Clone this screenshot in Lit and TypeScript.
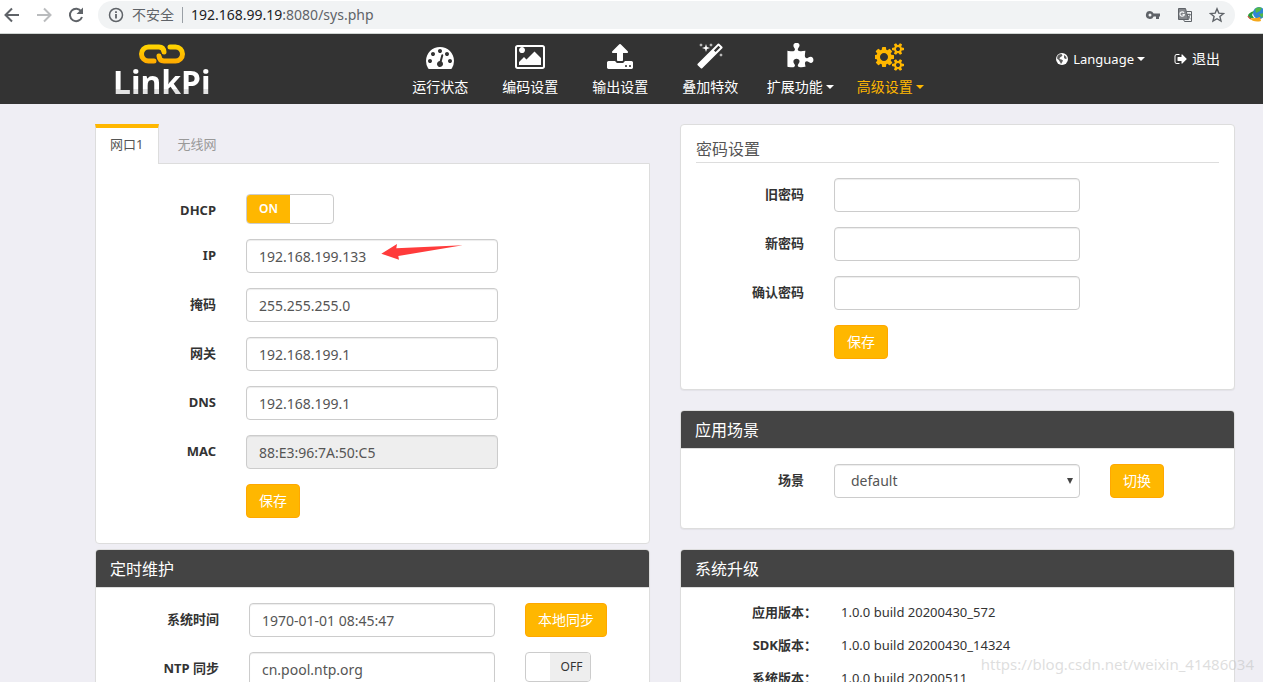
import { LitElement, html, css, svg, nothing } from "lit";
import { customElement, property, state } from "lit/decorators.js";

const ICONS: Record<string, { w: number; d: string }> = {
  gauge: {
    w: 1792,
    d: "M384 1152q0-53-37.5-90.5t-90.5-37.5-90.5 37.5-37.5 90.5 37.5 90.5 90.5 37.5 90.5-37.5 37.5-90.5zm192-448q0-53-37.5-90.5t-90.5-37.5-90.5 37.5-37.5 90.5 37.5 90.5 90.5 37.5 90.5-37.5 37.5-90.5zm428 481l101-382q6-26-7.5-48.5t-38.5-29.5-48 6.5-30 39.5l-101 382q-60 5-107 43.5t-63 98.5q-20 77 20 146t117 89 146-20 89-117q16-60-6-117t-72-91zm660-33q0-53-37.5-90.5t-90.5-37.5-90.5 37.5-37.5 90.5 37.5 90.5 90.5 37.5 90.5-37.5 37.5-90.5zm-640-640q0-53-37.5-90.5t-90.5-37.5-90.5 37.5-37.5 90.5 37.5 90.5 90.5 37.5 90.5-37.5 37.5-90.5zm448 192q0-53-37.5-90.5t-90.5-37.5-90.5 37.5-37.5 90.5 37.5 90.5 90.5 37.5 90.5-37.5 37.5-90.5zm320 448q0 261-141 483-19 29-54 29h-1402q-35 0-54-29-141-221-141-483 0-182 71-348t191-286 286-191 348-71 348 71 286 191 191 286 71 348z",
  },
  picture: {
    w: 2048,
    d: "M704 448q0 80-56 136t-136 56-136-56-56-136 56-136 136-56 136 56 56 136zm1024 512v448h-1408v-192l320-320 160 160 512-512zm96-704h-1600q-13 0-22.5 9.5t-9.5 22.5v1216q0 13 9.5 22.5t22.5 9.5h1600q13 0 22.5-9.5t9.5-22.5v-1216q0-13-9.5-22.5t-22.5-9.5zm160 32v1216q0 66-47 113t-113 47h-1600q-66 0-113-47t-47-113v-1216q0-66 47-113t113-47h1600q66 0 113 47t47 113z",
  },
  upload: {
    w: 1792,
    d: "M1344 1472q0-26-19-45t-45-19-45 19-19 45 19 45 45 19 45-19 19-45zm256 0q0-26-19-45t-45-19-45 19-19 45 19 45 45 19 45-19 19-45zm128-224v320q0 40-28 68t-68 28h-1472q-40 0-68-28t-28-68v-320q0-40 28-68t68-28h427q21 56 70.5 92t110.5 36h256q61 0 110.5-36t70.5-92h427q40 0 68 28t28 68zm-325-648q-17 40-59 40h-256v448q0 26-19 45t-45 19h-256q-26 0-45-19t-19-45v-448h-256q-42 0-59-40-17-39 14-69l448-448q18-19 45-19t45 19l448 448q31 30 14 69z",
  },
  magic: {
    w: 1792,
    d: "M1254 581l293-293-107-107-293 293zm447-293q0 27-18 45l-1286 1286q-18 18-45 18t-45-18l-198-198q-18-18-18-45t18-45l1286-1286q18-18 45-18t45 18l198 198q18 18 18 45zm-1351-190l98 30-98 30-30 98-30-98-98-30 98-30 30-98zm350 162l196 60-196 60-60 196-60-196-196-60 196-60 60-196zm930 478l98 30-98 30-30 98-30-98-98-30 98-30 30-98zm-640-640l98 30-98 30-30 98-30-98-98-30 98-30 30-98z",
  },
  puzzle: {
    w: 1792,
    d: "M1755 1083q0 81-44.5 135t-123.5 54q-41 0-77.5-17.5t-59-38-56.5-38-71-17.5q-110 0-110 124 0 39 16 115t15 115v5q-22 0-33 1-34 3-97.5 11.5t-115.5 13.5-98 5q-61 0-103-26.5t-42-83.5q0-37 17.5-71t38-56.5 38-59 17.5-77.5q0-79-54-123.5t-135-44.5q-84 0-143 45.5t-59 127.5q0 43 15 83t33.5 64.5 33.5 53 15 50.5q0 45-46 89-37 35-117 35-95 0-245-24-9-2-27.5-4t-27.5-4l-13-2q-1 0-3-1-2 0-2-1v-1024q2 1 17.5 3.5t34 5 21.5 3.5q150 24 245 24 80 0 117-35 46-44 46-89 0-22-15-50.5t-33.5-53-33.5-64.5-15-83q0-82 59-127.5t144-45.5q80 0 134 44.5t54 123.5q0 41-17.5 77.5t-38 59-38 56.5-17.5 71q0 57 42 83.5t103 26.5q64 0 180-15t163-17v2q-1 2-3.5 17.5t-5 34-3.5 21.5q-24 150-24 245 0 80 35 117 44 46 89 46 22 0 50.5-15t53-33.5 64.5-33.5 83-15q82 0 127.5 59t45.5 143z",
  },
  cogs: {
    w: 1920,
    d: "M832 896q0-106-75-181t-181-75-181 75-75 181 75 181 181 75 181-75 75-181zm768 512q0-52-38-90t-90-38-90 38-38 90q0 53 37.5 90.5t90.5 37.5 90.5-37.5 37.5-90.5zm0-1024q0-52-38-90t-90-38-90 38-38 90q0 53 37.5 90.5t90.5 37.5 90.5-37.5 37.5-90.5zm-384 421v185q0 10-7 19.5t-16 10.5l-155 24q-11 35-32 76 34 48 90 115 7 11 7 20 0 12-7 19-23 30-82.5 89.5t-78.5 59.5q-11 0-21-7l-115-90q-37 19-77 31-11 108-23 155-7 24-30 24h-186q-11 0-20-7.5t-10-17.5l-23-153q-34-10-75-31l-118 89q-7 7-20 7-11 0-21-8-144-133-144-160 0-9 7-19 10-14 41-53t47-61q-23-44-35-82l-152-24q-10-1-17-9.5t-7-19.5v-185q0-10 7-19.5t16-10.5l155-24q11-35 32-76-34-48-90-115-7-11-7-20 0-12 7-20 22-30 82-89t79-59q11 0 21 7l115 90q34-18 77-32 11-108 23-154 7-24 30-24h186q11 0 20 7.5t10 17.5l23 153q34 10 75 31l118-89q8-7 20-7 11 0 21 8 144 133 144 160 0 8-7 19-12 16-42 54t-45 60q23 48 34 82l152 23q10 2 17 10.5t7 19.5zm640 533v140q0 16-149 31-12 27-30 52 51 113 51 138 0 4-4 7-122 71-124 71-8 0-46-47t-52-68q-20 2-30 2t-30-2q-14 21-52 68t-46 47q-2 0-124-71-4-3-4-7 0-25 51-138-18-25-30-52-149-15-149-31v-140q0-16 149-31 13-29 30-52-51-113-51-138 0-4 4-7 4-2 35-20t59-34 30-16q8 0 46 46.5t52 67.5q20-2 30-2t30 2q51-71 92-112l6-2q4 0 124 70 4 3 4 7 0 25-51 138 17 23 30 52 149 15 149 31zm0-1024v140q0 16-149 31-12 27-30 52 51 113 51 138 0 4-4 7-122 71-124 71-8 0-46-47t-52-68q-20 2-30 2t-30-2q-14 21-52 68t-46 47q-2 0-124-71-4-3-4-7 0-25 51-138-18-25-30-52-149-15-149-31v-140q0-16 149-31 13-29 30-52-51-113-51-138 0-4 4-7 4-2 35-20t59-34 30-16q8 0 46 46.5t52 67.5q20-2 30-2t30 2q51-71 92-112l6-2q4 0 124 70 4 3 4 7 0 25-51 138 17 23 30 52 149 15 149 31z",
  },
  signout: {
    w: 1664,
    d: "M704 1440q0 4 1 20t.5 26.5-3 23.5-10 19.5-20.5 6.5h-320q-119 0-203.5-84.5t-84.5-203.5v-704q0-119 84.5-203.5t203.5-84.5h320q13 0 22.5 9.5t9.5 22.5q0 4 1 20t.5 26.5-3 23.5-10 19.5-20.5 6.5h-320q-66 0-113 47t-47 113v704q0 66 47 113t113 47h312l11.5 1 11.5 3 8 5.5 7 9 2 13.5zm928-544q0 26-19 45l-544 544q-19 19-45 19t-45-19-19-45v-288h-448q-26 0-45-19t-19-45v-384q0-26 19-45t45-19h448v-288q0-26 19-45t45-19 45 19l544 544q19 19 19 45z",
  },
};

const icon = (name: string, cls: string) => {
  const i = ICONS[name];
  return html`<svg class=${cls} viewBox="0 0 ${i.w} 1792" aria-hidden="true">
    ${svg`<path d=${i.d} fill="currentColor"/>`}
  </svg>`;
};

const reset = css`
  *,
  *::before,
  *::after {
    box-sizing: border-box;
  }
  svg {
    display: block;
    flex: none;
  }
  a {
    color: inherit;
    text-decoration: none;
  }
  button,
  input,
  select {
    font: inherit;
    margin: 0;
  }
`;

@customElement("browser-bar")
export class BrowserBar extends LitElement {
  static styles = [
    reset,
    css`
      :host {
        display: flex;
        align-items: flex-start;
        height: 34px;
        padding: 1px 0 0 2px;
        background: #fff;
        border-bottom: 1px solid #d0d5d2;
        overflow: hidden;
        color: #5f6368;
        font-size: 14px;
        line-height: 28px;
      }
      .tool {
        display: grid;
        place-items: center;
        width: 32px;
        height: 28px;
        padding: 0;
        border: 0;
        background: none;
        color: #5f6368;
        flex: none;
      }
      .tool svg {
        margin-right: 12px;
      }
      .tool.off {
        color: #babcbe;
      }
      .pill {
        display: flex;
        flex: 1;
        align-items: center;
        gap: 8px;
        height: 28px;
        padding: 0 10px;
        border-radius: 14px;
        background: #f1f3f4;
      }
      .sep {
        width: 1px;
        height: 16px;
        background: #9aa0a6;
      }
      .url {
        flex: 1;
      }
      .host {
        color: #202124;
      }
      .acts {
        display: flex;
        gap: 16px;
      }
      .act {
        display: block;
        padding: 0;
        border: 0;
        background: none;
        color: #5f6368;
      }
      .ext {
        width: 16px;
        height: 28px;
        margin-left: 12px;
        display: flex;
        align-items: center;
        overflow: hidden;
      }
    `,
  ];
  render() {
    return html`
      <button class="tool" aria-label="back">
        <svg width="18" height="18" viewBox="0 0 18 18" fill="none" stroke="currentColor" stroke-width="2"><path d="M16 9H3M9 2.5 2.5 9 9 15.500" /></svg>
      </button>
      <button class="tool off" aria-label="forward">
        <svg width="18" height="18" viewBox="0 0 18 18" fill="none" stroke="currentColor" stroke-width="2"><path d="M2 9h13M9 2.500 15.500 9 9 15.500" /></svg>
      </button>
      <button class="tool" aria-label="reload">
        <svg width="18" height="18" viewBox="0 0 18 18" fill="none" stroke="currentColor" stroke-width="2"><path d="M14.300 5.500A6.200 6.200 0 1 0 15 11" /><path d="M16 1.500v6.500H9.500z" fill="currentColor" stroke="none" /></svg>
      </button>
      <div class="pill">
        <svg width="16" height="16" viewBox="0 0 16 16" fill="none" stroke="currentColor" stroke-width="1.500"><circle cx="8" cy="8" r="6.500" /><path d="M8 7v4.500M8 4.300v1.700" stroke-width="1.800" /></svg>
        <span>不安全</span>
        <span class="sep"></span>
        <span class="url"><span class="host">192.168.99.19</span>:8080/sys.php</span>
        <div class="acts">
          <button class="act" aria-label="password">
            <svg width="16" height="16" viewBox="0 0 16 16"><path fill="currentColor" fill-rule="evenodd" d="M5 4a4 4 0 1 0 3.600 5.500H11V12h3V9.500h1v-3H8.600A4 4 0 0 0 5 4zm0 2.500a1.500 1.500 0 1 1 0 3 1.500 1.500 0 0 1 0-3z" /></svg>
          </button>
          <button class="act" aria-label="translate">
            <svg width="16" height="16" viewBox="0 0 16 16" fill="none" stroke="currentColor"><path d="M1.500 1.500h7l3 11h-10z" fill="currentColor" fill-opacity=".75" /><path d="M9.500 4.500h5v10h-7l-1-2" /><path d="M7 5.800A2.200 2.200 0 1 0 7.300 7.500H5.500" stroke="#f1f3f4" stroke-width="1.200" /><path d="M9.800 7.500h4M12 6.500v1M13 8c-.5 2-1.500 3-2.500 3.800M10.800 8.500c.5 1.500 1.500 2.500 2.700 3.300" stroke-width=".9" /></svg>
          </button>
          <button class="act" aria-label="bookmark">
            <svg width="16" height="16" viewBox="0 0 16 16" fill="none" stroke="currentColor" stroke-width="1.400"><path d="m8 1.800 1.800 4.300 4.700.4-3.600 3 1.100 4.600L8 11.700l-4 2.400 1.100-4.600-3.600-3 4.700-.4z" /></svg>
          </button>
        </div>
      </div>
      <div class="ext">
        <svg width="20" height="18" viewBox="0 0 20 18"><circle cx="12" cy="7" r="6" fill="#2f86d6" /><path d="M8 3q3-3 7-1l-2 3-4 2zM12 8l5-1-2 5z" fill="#52b947" /><path d="M7 5Q1 7 1 10q1 3 6 2l-2-3z" fill="#2a9c3a" /><path d="M2 12q5 5 12 3l-1-4q-5 2-11 1z" fill="#f5a81c" /><path d="M1 10q0 2 3 3" stroke="#d13a2f" fill="none" /></svg>
      </div>
    `;
  }
}

interface NavItem {
  icon: string;
  text: string;
  menu?: boolean;
  active?: boolean;
}

@customElement("top-nav")
export class TopNav extends LitElement {
  static styles = [
    reset,
    css`
      :host {
        display: flex;
        height: 70px;
        padding: 0 43px 0 113px;
        background: #333;
        color: #fff;
        font-size: 14px;
        line-height: 20px;
      }
      .brand {
        display: flex;
        flex-direction: column;
        align-items: center;
        padding-top: 10px;
      }
      .name {
        font-family: "Noto Sans", sans-serif;
        font-weight: 700;
        font-size: 32px;
        line-height: 42px;
        margin-top: -3px;
        background: linear-gradient(#fff 66%, #e2e2e2 66%);
        background-clip: text;
        -webkit-background-clip: text;
        color: transparent;
      }
      .menu {
        display: flex;
        margin-left: auto;
        padding-top: 9px;
      }
      .item {
        display: flex;
        flex-direction: column;
        align-items: center;
        gap: 6px;
        width: 90px;
        white-space: nowrap;
      }
      .item.active {
        color: #ffb700;
      }
      .glyph {
        height: 28px;
      }
      .caption {
        display: flex;
        align-items: center;
        gap: 3px;
      }
      .caret {
        border: 4px solid transparent;
        border-top-color: currentColor;
        border-bottom: 0;
      }
      .side {
        display: flex;
        gap: 29px;
        margin-left: 121px;
        padding-top: 15px;
        font-size: 13px;
      }
      .side-link {
        display: flex;
        align-items: center;
        gap: 5px;
        height: 20px;
      }
      .logout {
        font-size: 14px;
      }
      .small {
        height: 14px;
      }
    `,
  ];
  private items: NavItem[] = [
    { icon: "gauge", text: "运行状态" },
    { icon: "picture", text: "编码设置" },
    { icon: "upload", text: "输出设置" },
    { icon: "magic", text: "叠加特效" },
    { icon: "puzzle", text: "扩展功能", menu: true },
    { icon: "cogs", text: "高级设置", menu: true, active: true },
  ];
  render() {
    return html`
      <a class="brand" href="#">
        <svg width="46" height="20" viewBox="0 0 46 20" fill="none" stroke-width="5" stroke-linecap="round">
          <defs>
            <linearGradient id="gold" gradientUnits="userSpaceOnUse" x1="0" y1="0" x2="0" y2="20">
              <stop offset="0" stop-color="#ffd800" /><stop offset="1" stop-color="#ffa800" />
            </linearGradient>
          </defs>
          <path stroke="url(#gold)" d="M15 17H9.500a7 7 0 0 1 0-14H20q4.500 0 5 5" />
          <path stroke="url(#gold)" d="M31 3h5.500a7 7 0 0 1 0 14H25q-4.500 0-5-5" />
        </svg>
        <span class="name">LinkPi</span>
      </a>
      <nav class="menu">
        ${this.items.map(
          (i) => html`<a class="item ${i.active ? "active" : ""}" href="#">
            ${icon(i.icon, "glyph")}
            <span class="caption">${i.text}${i.menu ? html`<span class="caret"></span>` : nothing}</span>
          </a>`
        )}
      </nav>
      <div class="side">
        <a class="side-link" href="#">
          <svg width="12" height="12" viewBox="0 0 12 12"><circle cx="6" cy="6" r="6" fill="#fff" /><path d="M3 1.500 5.500 1l1 1.500-1 1L4 4.500 3.500 6l2 .5 1.500 1-1 2-1 1.500L4 9 2.800 7 1 5.500 1.500 3zM8 2l2 1.500.8 2L9.500 6 8 5V3.500z" fill="#333" fill-opacity=".8" /></svg>
          <span class="caption">Language<span class="caret"></span></span>
        </a>
        <a class="side-link logout" href="#">${icon("signout", "small")}<span>退出</span></a>
      </div>
    `;
  }
}

/* Two-state switch: the coloured half slides over a hidden checkbox. */
@customElement("toggle-switch")
export class ToggleSwitch extends LitElement {
  @property({ type: Boolean }) on = false;
  @property() name = "";
  static styles = [
    reset,
    css`
      :host {
        display: block;
      }
      .switch {
        position: relative;
        display: inline-flex;
        height: 30px;
        border: 1px solid #ccc;
        border-radius: 4px;
        overflow: hidden;
        background: #fff;
        font-size: 12px;
        line-height: 28px;
        vertical-align: top;
      }
      .box {
        position: absolute;
        inset: 0;
        width: 100%;
        height: 100%;
        opacity: 0;
      }
      .half {
        width: 43px;
        text-align: center;
      }
      .yes {
        background: #ffb700;
        color: #fff;
        font-weight: 600;
      }
      .knob {
        width: 24px;
      }
      .no {
        width: 40px;
        background: #eee;
        color: #333;
        padding-left: 3px;
      }
    `,
  ];
  render() {
    return html`<label class="switch">
      <input class="box" type="checkbox" aria-label=${this.name} .checked=${this.on}
        @change=${(e: Event) => (this.on = (e.target as HTMLInputElement).checked)} />
      ${this.on
        ? html`<span class="half yes">ON</span><span class="half"></span>`
        : html`<span class="half knob"></span><span class="half no">OFF</span>`}
    </label>`;
  }
}

@customElement("app-root")
export class AppRoot extends LitElement {
  @state() private tab = 0;
  static styles = [
    reset,
    css`
      :host {
        display: flex;
        flex-direction: column;
        position: relative;
        height: 100vh;
        overflow: hidden;
        background: #efeef4;
        color: #333;
        font-family: "Noto Sans", "Noto Sans CJK SC", sans-serif;
        font-size: 13px;
        line-height: 20px;
      }
      browser-bar,
      top-nav {
        flex: none;
      }
      .page {
        display: grid;
        grid-template-columns: 1fr 1fr;
        gap: 30px;
        align-items: start;
        padding: 20px 28px 20px 95px;
      }
      .col {
        display: flex;
        flex-direction: column;
        gap: 20px;
      }
      .col.tight {
        gap: 5px;
      }
      .tabs {
        display: flex;
        gap: 3px;
        margin-bottom: -1px;
      }
      .tab {
        display: flex;
        height: 40px;
        padding: 4px 15px 0;
        border: 0;
        background: none;
        color: #999;
        line-height: 32px;
      }
      .tab.current {
        padding: 0 15px 0 14px;
        border: 1px solid #ddd;
        border-top: 4px solid #ffb700;
        border-bottom: 0;
        background: #fff;
        color: #555;
        position: relative;
      }
      .panel {
        background: #fff;
        border: 1px solid #ddd;
        border-radius: 4px;
        box-shadow: 0 1px 1px rgba(0, 0, 0, 0.05);
      }
      .panel.tabbed {
        border-radius: 0 0 4px 4px;
        box-shadow: none;
      }
      .head {
        margin: 0;
        padding: 1px 14px 0;
        border-bottom: 1px solid #ddd;
        border-radius: 3px 3px 0 0;
        background: #444;
        color: #fff;
        font-size: 16px;
        font-weight: 400;
        line-height: 36px;
      }
      .body {
        display: flex;
        flex-direction: column;
        gap: 15px;
        padding: 15px 15px 30px;
      }
      .tabbed .body {
        padding: 30px 15px 25px;
      }
      .title {
        margin: 0;
        border-bottom: 1px solid #ddd;
        color: #555;
        font-size: 16px;
        font-weight: 400;
        line-height: 20px;
        padding-bottom: 3px;
      }
      .body.plain {
        padding-top: 14px;
      }
      .row {
        display: grid;
        grid-template-columns: 108fr 246fr 109fr;
        column-gap: 30px;
        align-items: start;
      }
      .net .row {
        grid-template-columns: 105fr 252fr 106fr;
      }
      .label {
        text-align: right;
        font-weight: 700;
        white-space: nowrap;
      }
      .row .label {
        padding-top: 6px;
      }
      .field {
        position: relative;
      }
      .input {
        display: block;
        width: 100%;
        height: 34px;
        padding: 6px 12px;
        border: 1px solid #ccc;
        border-radius: 4px;
        background: #fff;
        box-shadow: inset 0 1px 1px rgba(0, 0, 0, 0.075);
        color: #555;
        font-size: 14px;
        appearance: none;
      }
      .input[readonly] {
        background: #eee;
      }
      select.input {
        padding-left: 16px;
      }
      .drop {
        position: absolute;
        right: 7px;
        top: 14px;
        pointer-events: none;
      }
      .pointer {
        position: absolute;
        left: 135px;
        top: 4px;
        pointer-events: none;
      }
      .btn {
        justify-self: start;
        height: 34px;
        padding: 0 12px;
        border: 1px solid #ffa800;
        border-radius: 4px;
        background: #ffb700;
        color: #fff;
        font-size: 14px;
        white-space: nowrap;
      }
      .save {
        grid-column: 2;
      }
      .versions {
        display: grid;
        grid-template-columns: 121fr 378fr;
        gap: 13px 24px;
        margin: 0;
        padding: 14px 15px 30px;
      }
      .versions dd {
        margin: 0;
      }
      .mark {
        position: absolute;
        right: 9px;
        bottom: 6px;
        color: rgba(190, 190, 190, 0.5);
        font-size: 15px;
        line-height: 24px;
        pointer-events: none;
      }
    `,
  ];

  private net = [
    ["IP", "192.168.199.133"],
    ["掩码", "255.255.255.0"],
    ["网关", "192.168.199.1"],
    ["DNS", "192.168.199.1"],
    ["MAC", "88:E3:96:7A:50:C5"],
  ];
  private versions = [
    ["应用版本：", "1.0.0 build 20200430_572"],
    ["SDK版本：", "1.0.0 build 20200430_14324"],
    ["系统版本：", "1.0.0 build 20200511"],
  ];

  render() {
    return html`
      <browser-bar></browser-bar>
      <top-nav></top-nav>
      <main class="page">
        <div class="col tight">
          <section>
            <div class="tabs" role="tablist">
              ${["网口1", "无线网"].map(
                (t, i) => html`<button class="tab ${this.tab === i ? "current" : ""}" role="tab"
                  aria-selected=${this.tab === i} @click=${() => (this.tab = i)}>${t}</button>`
              )}
            </div>
            <div class="panel tabbed">
              <form class="body net">
                <div class="row">
                  <span class="label">DHCP</span>
                  <toggle-switch name="DHCP" on></toggle-switch>
                </div>
                ${this.net.map(
                  ([k, v]) => html`<div class="row">
                    <label class="label" for="net-${k}">${k}</label>
                    <div class="field">
                      <input class="input" id="net-${k}" .value=${v} ?readonly=${k === "MAC"} />
                      ${k === "IP"
                        ? html`<svg class="pointer" width="82" height="18" viewBox="0 0 82 18"><path d="M.3 10.700 16 1l-.7 4.300L81.700 2.300 17.300 13l.7 3.700z" fill="#ff3b3b" /></svg>`
                        : nothing}
                    </div>
                  </div>`
                )}
                <div class="row"><button class="btn save" type="button">保存</button></div>
              </form>
            </div>
          </section>
          <section class="panel">
            <h2 class="head">定时维护</h2>
            <form class="body">
              <div class="row">
                <label class="label" for="time">系统时间</label>
                <input class="input" id="time" value="1970-01-01 08:45:47" />
                <button class="btn" type="button">本地同步</button>
              </div>
              <div class="row">
                <label class="label" for="ntp">NTP 同步</label>
                <input class="input" id="ntp" value="cn.pool.ntp.org" />
                <toggle-switch name="NTP 同步"></toggle-switch>
              </div>
            </form>
          </section>
        </div>
        <div class="col">
          <section class="panel">
            <form class="body plain">
              <h2 class="title">密码设置</h2>
              ${["旧密码", "新密码", "确认密码"].map(
                (k, i) => html`<div class="row">
                  <label class="label" for="pw-${i}">${k}</label>
                  <input class="input" id="pw-${i}" type="password" />
                </div>`
              )}
              <div class="row"><button class="btn save" type="button">保存</button></div>
            </form>
          </section>
          <section class="panel">
            <h2 class="head">应用场景</h2>
            <form class="body">
              <div class="row">
                <label class="label" for="scene">场景</label>
                <div class="field">
                  <select class="input" id="scene"><option>default</option></select>
                  <svg class="drop" width="6" height="6" viewBox="0 0 6 6"><path d="M0 0h6L3 6z" fill="#444" /></svg>
                </div>
                <button class="btn" type="button">切换</button>
              </div>
            </form>
          </section>
          <section class="panel">
            <h2 class="head">系统升级</h2>
            <dl class="versions">
              ${this.versions.map(([k, v]) => html`<dt class="label">${k}</dt><dd>${v}</dd>`)}
            </dl>
          </section>
        </div>
      </main>
      <span class="mark">https://blog.csdn.net/weixin_41486034</span>
    `;
  }
}
